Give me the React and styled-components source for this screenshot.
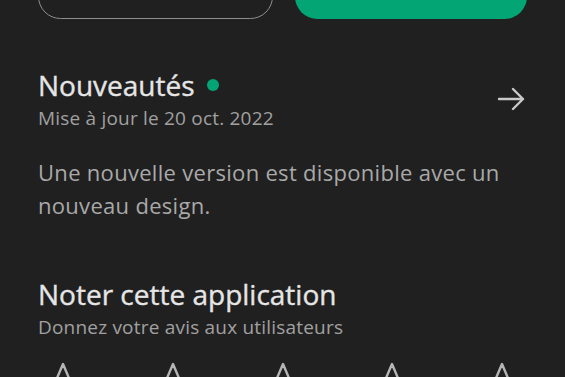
import React from "react";
import styled, { createGlobalStyle } from "styled-components";

const GlobalStyle = createGlobalStyle`
  html, body {
    margin: 0;
    padding: 0;
    background: #202020;
    overflow: hidden;
  }
`;

const Page = styled.div`
  width: 565px;
  height: 377px;
  box-sizing: border-box;
  padding: 0 38px;
  background: #202020;
  font-family: "Open Sans", Roboto, sans-serif;
  overflow: hidden;
`;

const ButtonRow = styled.div`
  display: flex;
  gap: 22px;
  margin-top: -26px;
`;

const PillButton = styled.button`
  flex: 1;
  height: 45px;
  border-radius: 23px;
  box-sizing: border-box;
  border: ${(p) => (p.$primary ? "none" : "1.5px solid #8e8e8e")};
  background: ${(p) => (p.$primary ? "#03a574" : "transparent")};
`;

const Section = styled.section`
  margin-top: ${(p) => p.$top}px;
`;

const HeaderRow = styled.div`
  display: flex;
  align-items: center;
  justify-content: space-between;
`;

const Title = styled.h2`
  margin: 0;
  display: flex;
  align-items: center;
  gap: 12px;
  font-size: 28px;
  font-weight: 500;
  line-height: 34px;
  color: #e6e6e6;
  -webkit-text-stroke: 0.35px #e6e6e6;
`;

const Dot = styled.span`
  width: 12px;
  height: 12px;
  border-radius: 50%;
  background: #03a574;
`;

const Subtitle = styled.div`
  margin-top: 4px;
  font-size: 19px;
  line-height: 24px;
  letter-spacing: 0.2px;
  color: #a0a0a0;
`;

const Body = styled.p`
  margin: 26px 0 0;
  font-size: 22px;
  line-height: 33px;
  letter-spacing: 0.3px;
  color: #a9a9a9;
`;

const Stars = styled.div`
  display: flex;
  justify-content: space-between;
  margin-top: 22px;
`;

const Arrow = () => (
  <svg width="30" height="26" viewBox="0 0 30 26" fill="none">
    <path
      d="M2 13H26M16 3L26 13L16 23"
      stroke="#c8c8c8"
      strokeWidth="2.4"
      strokeLinecap="round"
      strokeLinejoin="round"
    />
  </svg>
);

const Star = () => (
  <svg width="50" height="48" viewBox="0 0 50 48" fill="none">
    <path
      d="M25 3L31.2 17.6L47 18.9L35 29.3L38.6 44.7L25 36.6L11.4 44.7L15 29.3L3 18.9L18.8 17.6Z"
      stroke="#b5b5b5"
      strokeWidth="2.4"
      strokeLinejoin="round"
    />
  </svg>
);

export default function App() {
  return (
    <Page>
      <GlobalStyle />
      <ButtonRow>
        <PillButton />
        <PillButton $primary />
      </ButtonRow>

      <Section $top={49}>
        <HeaderRow>
          <div>
            <Title>
              Nouveautés <Dot />
            </Title>
            <Subtitle>Mise à jour le 20 oct. 2022</Subtitle>
          </div>
          <Arrow />
        </HeaderRow>
        <Body>
          Une nouvelle version est disponible avec un nouveau design.
        </Body>
      </Section>

      <Section $top={55}>
        <Title>Noter cette application</Title>
        <Subtitle>Donnez votre avis aux utilisateurs</Subtitle>
        <Stars>
          {[0, 1, 2, 3, 4].map((i) => (
            <Star key={i} />
          ))}
        </Stars>
      </Section>
    </Page>
  );
}
